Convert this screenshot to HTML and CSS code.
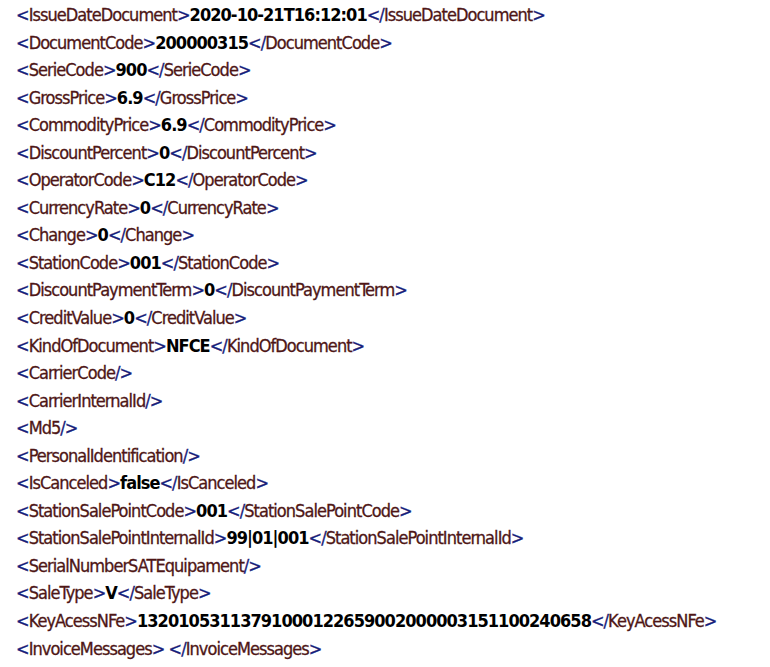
FILE: index.html
```html
<!DOCTYPE html>
<html>
<head>
<meta charset="utf-8">
<link rel="stylesheet" href="styles.css">
</head>
<body>
<div class="xml">
<div class="ln"><span class="b">&lt;</span><span class="t">IssueDateDocument</span><span class="b">&gt;</span><span class="v">2020-10-21T16:12:01</span><span class="b">&lt;/</span><span class="t">IssueDateDocument</span><span class="b">&gt;</span></div>
<div class="ln"><span class="b">&lt;</span><span class="t">DocumentCode</span><span class="b">&gt;</span><span class="v">200000315</span><span class="b">&lt;/</span><span class="t">DocumentCode</span><span class="b">&gt;</span></div>
<div class="ln"><span class="b">&lt;</span><span class="t">SerieCode</span><span class="b">&gt;</span><span class="v">900</span><span class="b">&lt;/</span><span class="t">SerieCode</span><span class="b">&gt;</span></div>
<div class="ln"><span class="b">&lt;</span><span class="t">GrossPrice</span><span class="b">&gt;</span><span class="v">6.9</span><span class="b">&lt;/</span><span class="t">GrossPrice</span><span class="b">&gt;</span></div>
<div class="ln"><span class="b">&lt;</span><span class="t">CommodityPrice</span><span class="b">&gt;</span><span class="v">6.9</span><span class="b">&lt;/</span><span class="t">CommodityPrice</span><span class="b">&gt;</span></div>
<div class="ln"><span class="b">&lt;</span><span class="t">DiscountPercent</span><span class="b">&gt;</span><span class="v">0</span><span class="b">&lt;/</span><span class="t">DiscountPercent</span><span class="b">&gt;</span></div>
<div class="ln"><span class="b">&lt;</span><span class="t">OperatorCode</span><span class="b">&gt;</span><span class="v">C12</span><span class="b">&lt;/</span><span class="t">OperatorCode</span><span class="b">&gt;</span></div>
<div class="ln"><span class="b">&lt;</span><span class="t">CurrencyRate</span><span class="b">&gt;</span><span class="v">0</span><span class="b">&lt;/</span><span class="t">CurrencyRate</span><span class="b">&gt;</span></div>
<div class="ln"><span class="b">&lt;</span><span class="t">Change</span><span class="b">&gt;</span><span class="v">0</span><span class="b">&lt;/</span><span class="t">Change</span><span class="b">&gt;</span></div>
<div class="ln"><span class="b">&lt;</span><span class="t">StationCode</span><span class="b">&gt;</span><span class="v">001</span><span class="b">&lt;/</span><span class="t">StationCode</span><span class="b">&gt;</span></div>
<div class="ln"><span class="b">&lt;</span><span class="t">DiscountPaymentTerm</span><span class="b">&gt;</span><span class="v">0</span><span class="b">&lt;/</span><span class="t">DiscountPaymentTerm</span><span class="b">&gt;</span></div>
<div class="ln"><span class="b">&lt;</span><span class="t">CreditValue</span><span class="b">&gt;</span><span class="v">0</span><span class="b">&lt;/</span><span class="t">CreditValue</span><span class="b">&gt;</span></div>
<div class="ln"><span class="b">&lt;</span><span class="t">KindOfDocument</span><span class="b">&gt;</span><span class="v">NFCE</span><span class="b">&lt;/</span><span class="t">KindOfDocument</span><span class="b">&gt;</span></div>
<div class="ln"><span class="b">&lt;</span><span class="t">CarrierCode</span><span class="b">/&gt;</span></div>
<div class="ln"><span class="b">&lt;</span><span class="t">CarrierInternalId</span><span class="b">/&gt;</span></div>
<div class="ln"><span class="b">&lt;</span><span class="t">Md5</span><span class="b">/&gt;</span></div>
<div class="ln"><span class="b">&lt;</span><span class="t">PersonalIdentification</span><span class="b">/&gt;</span></div>
<div class="ln"><span class="b">&lt;</span><span class="t">IsCanceled</span><span class="b">&gt;</span><span class="v">false</span><span class="b">&lt;/</span><span class="t">IsCanceled</span><span class="b">&gt;</span></div>
<div class="ln"><span class="b">&lt;</span><span class="t">StationSalePointCode</span><span class="b">&gt;</span><span class="v">001</span><span class="b">&lt;/</span><span class="t">StationSalePointCode</span><span class="b">&gt;</span></div>
<div class="ln"><span class="b">&lt;</span><span class="t">StationSalePointInternalId</span><span class="b">&gt;</span><span class="v">99|01|001</span><span class="b">&lt;/</span><span class="t">StationSalePointInternalId</span><span class="b">&gt;</span></div>
<div class="ln"><span class="b">&lt;</span><span class="t">SerialNumberSATEquipament</span><span class="b">/&gt;</span></div>
<div class="ln"><span class="b">&lt;</span><span class="t">SaleType</span><span class="b">&gt;</span><span class="v">V</span><span class="b">&lt;/</span><span class="t">SaleType</span><span class="b">&gt;</span></div>
<div class="ln"><span class="b">&lt;</span><span class="t">KeyAcessNFe</span><span class="b">&gt;</span><span class="v">13201053113791000122659002000003151100240658</span><span class="b">&lt;/</span><span class="t">KeyAcessNFe</span><span class="b">&gt;</span></div>
<div class="ln"><span class="b">&lt;</span><span class="t">InvoiceMessages</span><span class="b">&gt;</span> <span class="b">&lt;/</span><span class="t">InvoiceMessages</span><span class="b">&gt;</span></div>
</div>
</body>
</html>
```
FILE: styles.css
```css
html, body {
  margin: 0;
  padding: 0;
  background: #ffffff;
}
.xml {
  padding: 1px 0 0 16px;
  font-family: "DejaVu Sans Condensed", "Liberation Sans", sans-serif;
  font-size: 18px;
  line-height: 27.55px;
  letter-spacing: -0.95px;
  color: #000;
}
.ln {
  white-space: pre;
}
.b {
  color: #16207a;
  -webkit-text-stroke: 0.3px #16207a;
}
.t {
  color: #4e1616;
  -webkit-text-stroke: 0.3px #4e1616;
}
.v {
  font-weight: bold;
  color: #000;
}
```
